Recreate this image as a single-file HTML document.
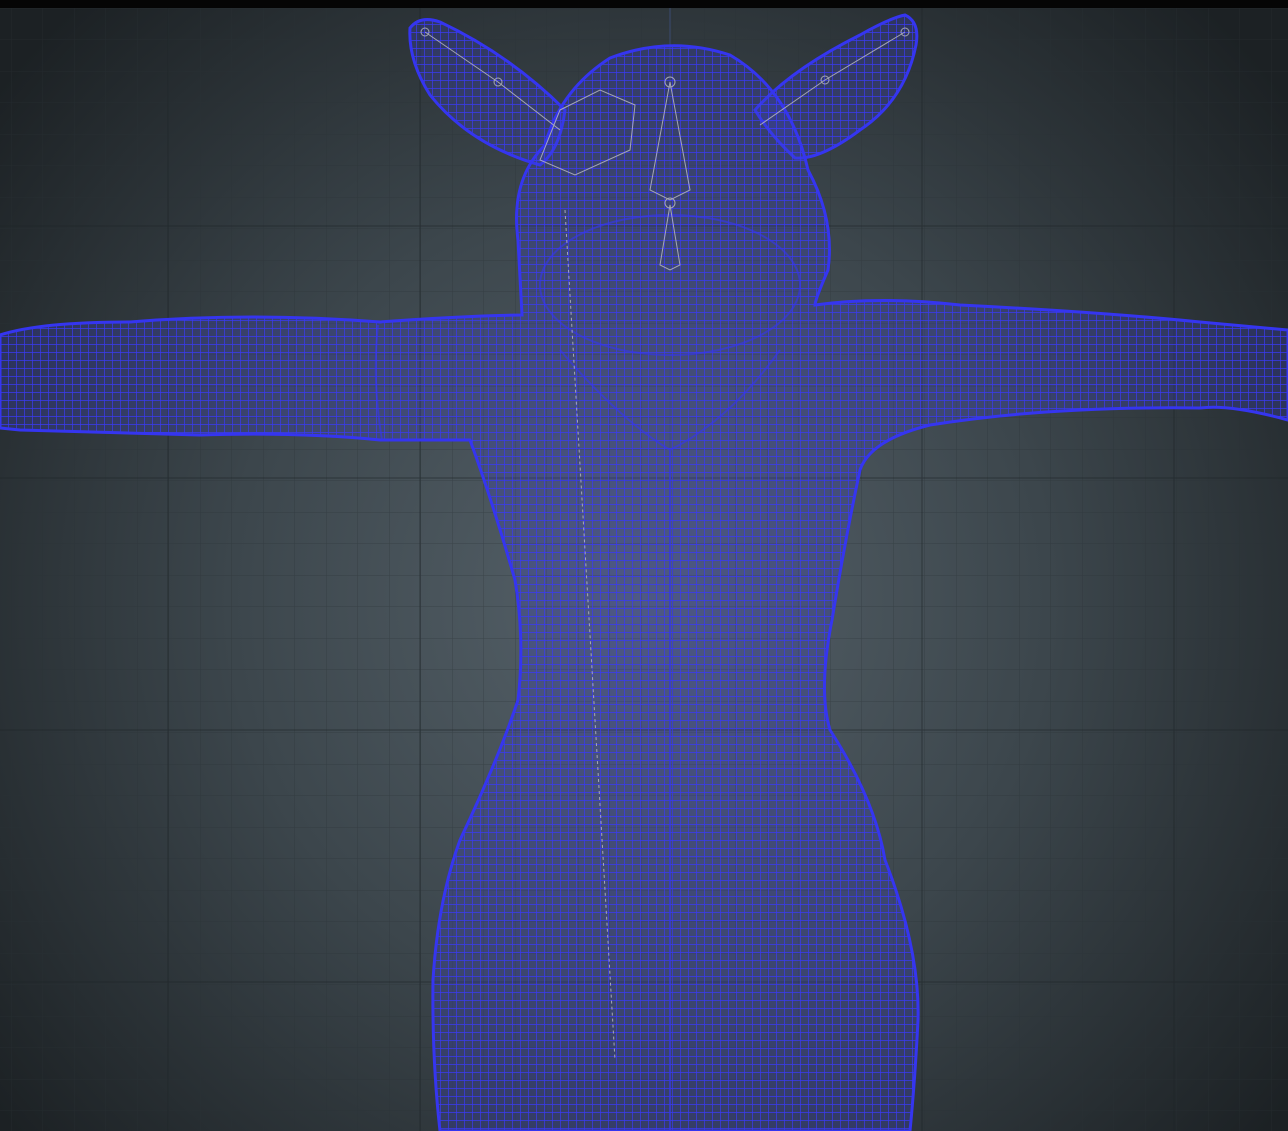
<!DOCTYPE html>
<html><head><meta charset="utf-8"><style>
html,body{margin:0;padding:0;background:#000;width:1288px;height:1131px;overflow:hidden}
svg{display:block}
</style></head><body>
<svg width="1288" height="1131" viewBox="0 0 1288 1131" xmlns="http://www.w3.org/2000/svg">
<defs>
<radialGradient id="bg" cx="640" cy="600" r="820" gradientUnits="userSpaceOnUse">
<stop offset="0" stop-color="#56626a"/>
<stop offset="0.5" stop-color="#3c464c"/>
<stop offset="1" stop-color="#1c2124"/>
</radialGradient>
<pattern id="grid" width="31.5" height="31.5" patternUnits="userSpaceOnUse" x="11" y="8">
<path d="M0 0H31.5M0 0V31.5" stroke="#2a3236" stroke-width="1" fill="none" opacity="0.5"/>
</pattern>
<pattern id="mesh" width="8" height="8" patternUnits="userSpaceOnUse">
<rect width="8" height="8" fill="#3a3fc8" fill-opacity="0.28"/>
<path d="M0 0H8M0 0V8" stroke="#3a3af2" stroke-width="1.4" fill="none"/>
</pattern>
</defs>
<rect width="1288" height="1131" fill="url(#bg)"/>
<rect width="1288" height="1131" fill="url(#grid)"/>
<g stroke="#1e2528" stroke-width="1" opacity="0.6">
<line x1="0" y1="226" x2="1288" y2="226"/><line x1="0" y1="478" x2="1288" y2="478"/><line x1="0" y1="730" x2="1288" y2="730"/><line x1="0" y1="982" x2="1288" y2="982"/>
<line x1="168" y1="0" x2="168" y2="1131"/><line x1="420" y1="0" x2="420" y2="1131"/><line x1="922" y1="0" x2="922" y2="1131"/><line x1="1174" y1="0" x2="1174" y2="1131"/>
</g>
<line x1="670" y1="8" x2="670" y2="1131" stroke="#3a4a70" stroke-width="1"/>
<rect width="1288" height="8" fill="#050505"/>
<g fill="url(#mesh)" stroke="#3535f0" stroke-width="3">
<path d="M410 28 Q420 15 440 22 Q510 55 565 110 Q560 150 540 165 Q470 145 430 95 Q408 60 410 28 Z"/>
<path d="M905 15 Q920 22 916 45 Q905 100 860 130 Q820 160 795 158 Q770 135 755 110 Q790 70 860 35 Q890 18 905 15 Z"/>
<path d="M0 335 Q40 322 130 322 Q250 312 380 322 Q460 316 522 315 Q520 280 518 240 Q510 180 545 145 Q560 90 610 58 Q670 35 730 55 Q790 90 808 170 Q835 220 828 270 Q815 300 815 305 Q880 296 960 305 Q1100 312 1200 322 L1288 330 L1288 420 Q1230 404 1200 408 Q1050 406 930 425 Q870 440 860 470 Q845 540 832 620 Q818 690 830 730 Q875 800 885 860 Q920 950 918 1020 Q915 1080 910 1131 L440 1131 Q432 1060 433 980 Q438 900 460 840 Q498 760 518 700 Q525 640 515 580 Q492 500 470 440 Q420 440 380 440 Q300 432 200 435 Q100 432 20 430 L0 428 Z"/>
</g>
<g stroke="#3535f0" stroke-width="2" fill="none" opacity="0.6">
<ellipse cx="670" cy="285" rx="130" ry="70"/>
<path d="M670 450 V1131"/>
<path d="M560 350 Q620 420 670 450 Q730 420 780 350"/>
<path d="M378 325 Q372 380 382 440"/>
</g>
<g stroke="#b8b8c0" stroke-width="1" fill="none" opacity="0.85">
<path d="M425 32 L498 82 L560 130 M905 32 L825 80 L760 125"/>
<path d="M670 82 L650 190 L670 200 L690 190 Z M670 205 L660 265 L670 270 L680 265 Z"/>
<path d="M560 110 L600 90 L635 105 L630 150 L575 175 L540 160 Z"/>
<path d="M565 210 L615 1060" stroke-dasharray="3 3"/>
<circle cx="425" cy="32" r="4"/><circle cx="498" cy="82" r="4"/><circle cx="905" cy="32" r="4"/><circle cx="825" cy="80" r="4"/><circle cx="670" cy="82" r="5"/><circle cx="670" cy="203" r="5"/>
</g>
</svg>
</body></html>
